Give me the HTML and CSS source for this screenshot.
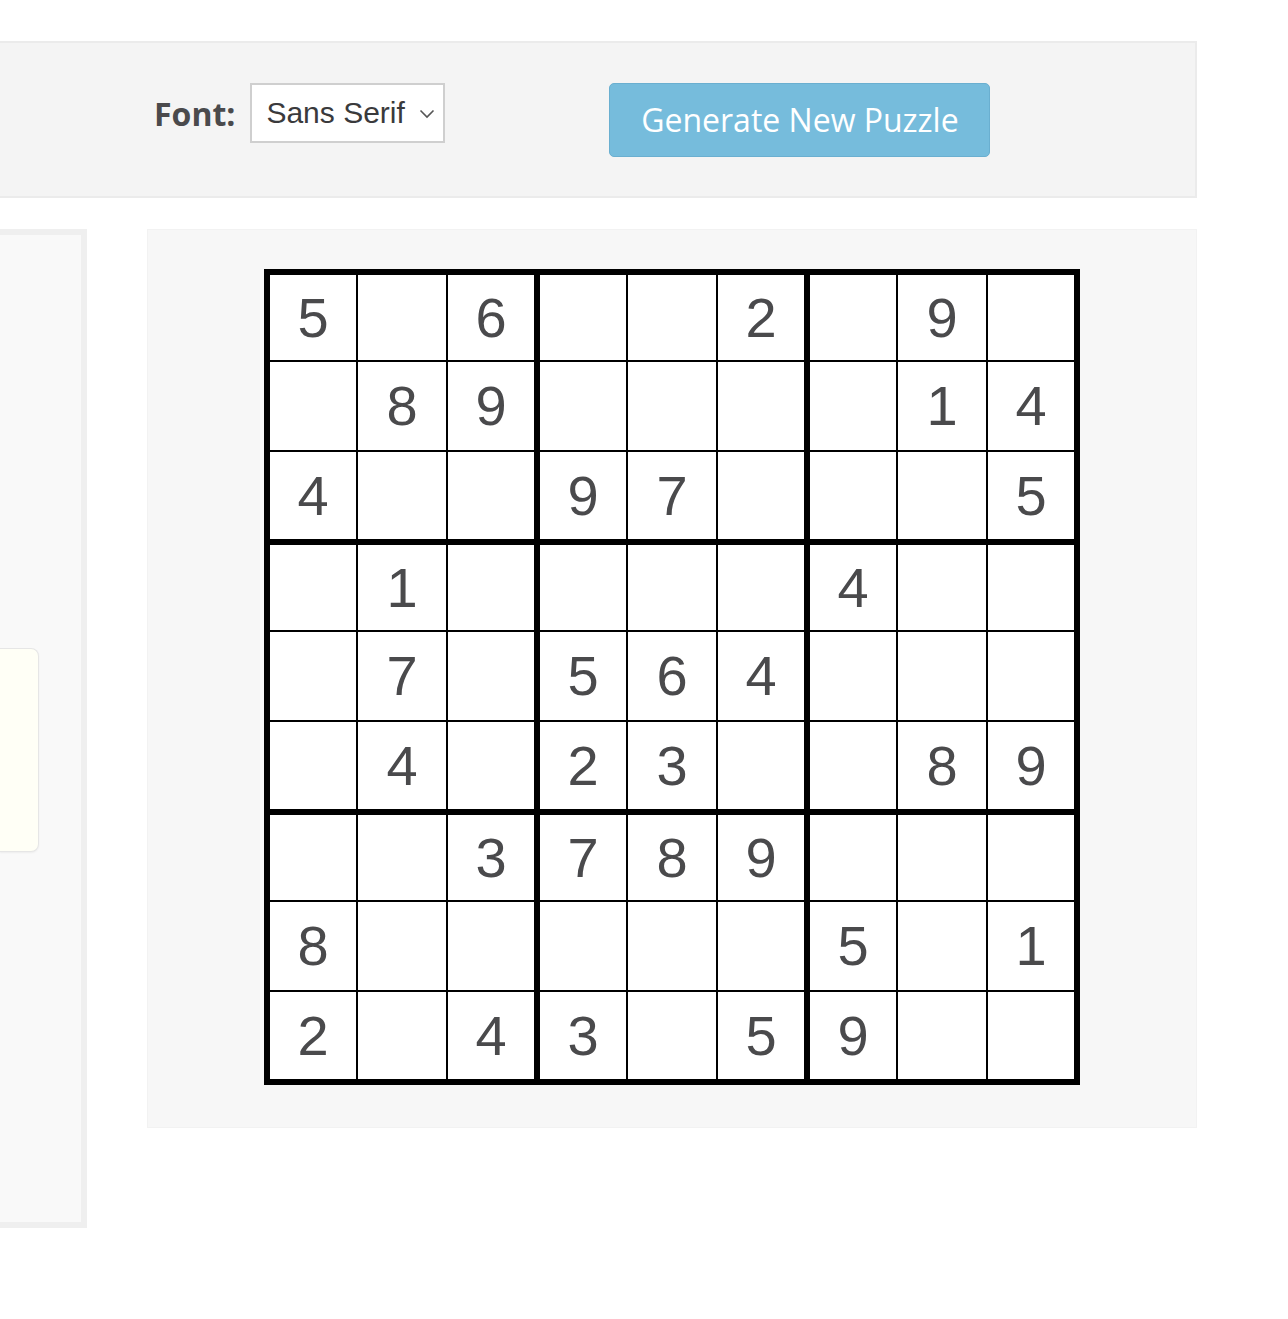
FILE: index.html
```html
<!DOCTYPE html>
<html>
<head>
<meta charset="utf-8">
<link rel="stylesheet" href="styles.css">
</head>
<body>
<div class="page">
  <div class="toolbar">
    <div class="font-group">
      <span class="font-label">Font:</span>
      <div class="select">
        <span class="select-text">Sans Serif</span>
        <svg class="chev" width="16" height="10" viewBox="0 0 16 10"><path d="M1.5 1.5 L8 8 L14.5 1.5" fill="none" stroke="#555" stroke-width="1.6"/></svg>
      </div>
    </div>
    <button class="gen-btn">Generate New Puzzle</button>
  </div>
  <div class="main">
    <div class="side">
      <div class="note"></div>
    </div>
    <div class="board-panel">
      <div class="board">
        <div class="box"><div class="c">5</div><div class="c"></div><div class="c">6</div><div class="c"></div><div class="c">8</div><div class="c">9</div><div class="c">4</div><div class="c"></div><div class="c"></div></div>
        <div class="box"><div class="c"></div><div class="c"></div><div class="c">2</div><div class="c"></div><div class="c"></div><div class="c"></div><div class="c">9</div><div class="c">7</div><div class="c"></div></div>
        <div class="box"><div class="c"></div><div class="c">9</div><div class="c"></div><div class="c"></div><div class="c">1</div><div class="c">4</div><div class="c"></div><div class="c"></div><div class="c">5</div></div>
        <div class="box"><div class="c"></div><div class="c">1</div><div class="c"></div><div class="c"></div><div class="c">7</div><div class="c"></div><div class="c"></div><div class="c">4</div><div class="c"></div></div>
        <div class="box"><div class="c"></div><div class="c"></div><div class="c"></div><div class="c">5</div><div class="c">6</div><div class="c">4</div><div class="c">2</div><div class="c">3</div><div class="c"></div></div>
        <div class="box"><div class="c">4</div><div class="c"></div><div class="c"></div><div class="c"></div><div class="c"></div><div class="c"></div><div class="c"></div><div class="c">8</div><div class="c">9</div></div>
        <div class="box"><div class="c"></div><div class="c"></div><div class="c">3</div><div class="c">8</div><div class="c"></div><div class="c"></div><div class="c">2</div><div class="c"></div><div class="c">4</div></div>
        <div class="box"><div class="c">7</div><div class="c">8</div><div class="c">9</div><div class="c"></div><div class="c"></div><div class="c"></div><div class="c">3</div><div class="c"></div><div class="c">5</div></div>
        <div class="box"><div class="c"></div><div class="c"></div><div class="c"></div><div class="c">5</div><div class="c"></div><div class="c">1</div><div class="c">9</div><div class="c"></div><div class="c"></div></div>
      </div>
    </div>
  </div>
</div>
</body>
</html>
```
FILE: styles.css
```css
html, body {
  margin: 0;
  padding: 0;
  background: #ffffff;
}
body {
  font-family: "Open Sans", "Liberation Sans", sans-serif;
  color: #4a4a4a;
}
.page {
  width: 1197px;
  padding-top: 41px;
}
.toolbar {
  box-sizing: border-box;
  height: 157px;
  background: #f4f4f4;
  border: 2px solid #ebebeb;
  border-left: none;
  display: flex;
  align-items: flex-start;
  padding-top: 40px;
  padding-left: 154px;
}
.font-group {
  display: flex;
  align-items: center;
  height: 60px;
}
.font-label {
  font-family: "Open Sans", sans-serif;
  font-weight: 700;
  font-size: 32px;
  color: #4a4a4c;
  margin-right: 15px;
}
.select {
  box-sizing: border-box;
  width: 195px;
  height: 60px;
  background: #ffffff;
  border: 2px solid #cfcfcf;
  display: flex;
  align-items: center;
  padding-left: 14px;
  padding-right: 8px;
}
.select-text {
  font-family: "Liberation Sans", Arial, sans-serif;
  font-size: 30px;
  color: #3a3a3c;
  flex: 1;
}
.chev {
  display: block;
  margin-top: 2px;
}
.gen-btn {
  box-sizing: border-box;
  margin-left: 164px;
  width: 381px;
  height: 74px;
  background: #76bcdc;
  border: 1px solid #6aafd0;
  border-radius: 5px;
  color: #ffffff;
  font-family: "Open Sans", sans-serif;
  font-size: 32px;
  padding: 0;
  padding-bottom: 2px;
}
.main {
  display: flex;
  align-items: flex-start;
  margin-top: 31px;
}
.side {
  box-sizing: border-box;
  width: 87px;
  height: 999px;
  background: #f9f9f9;
  border: 6px solid #efefef;
  border-left: none;
  display: flex;
  justify-content: flex-end;
  padding-top: 413px;
  padding-right: 42px;
}
.note {
  box-sizing: border-box;
  width: 60px;
  height: 204px;
  background: #fffff6;
  border: 1px solid #e6e6e6;
  border-left: none;
  border-radius: 0 8px 8px 0;
  box-shadow: 0 1px 2px rgba(0,0,0,0.05);
}
.board-panel {
  box-sizing: border-box;
  margin-left: 60px;
  width: 1050px;
  height: 899px;
  background: #f7f7f7;
  border: 1px solid #f2f2f2;
  display: flex;
  justify-content: center;
  padding-top: 39px;
}
.board {
  display: grid;
  grid-template-columns: repeat(3, 264px);
  grid-template-rows: repeat(3, 264px);
  gap: 6px;
  padding: 6px;
  background: #000000;
  width: max-content;
  height: max-content;
}
.box {
  display: grid;
  grid-template-columns: 86px 88px 86px;
  grid-template-rows: 85px 88px 87px;
  gap: 2px;
  background: #000000;
}
.c {
  background: #ffffff;
  display: flex;
  align-items: center;
  justify-content: center;
  font-family: "Liberation Sans", Arial, sans-serif;
  font-size: 56px;
  color: #4a4a4c;
  line-height: 1;
}
```
